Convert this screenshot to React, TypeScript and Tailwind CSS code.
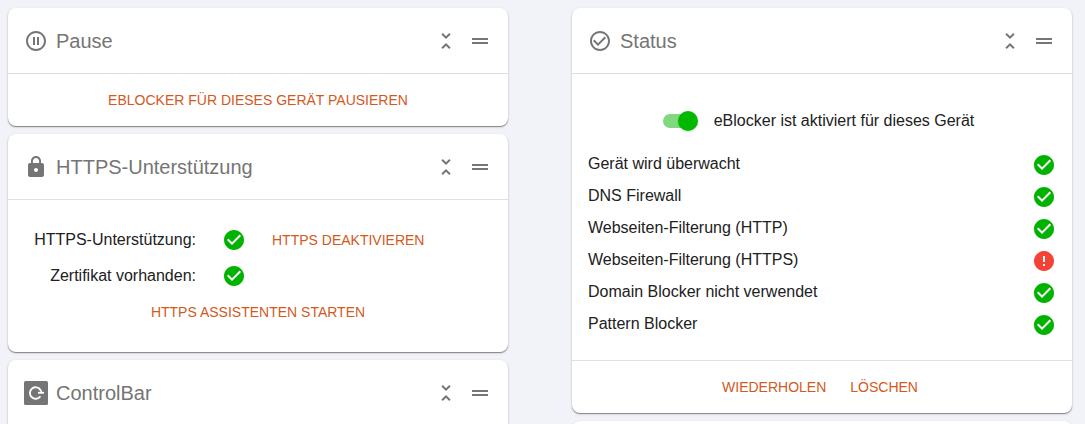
import { useState, type ReactNode } from "react";
import {
  MdCheckCircle,
  MdCheckCircleOutline,
  MdDragHandle,
  MdError,
  MdLock,
  MdPauseCircleOutline,
  MdUnfoldLess,
} from "react-icons/md";

function ControlBarIcon() {
  return (
    <svg viewBox="0 0 24 24" className="size-6" aria-hidden="true">
      <rect width="24" height="24" rx="1.5" fill="#757575" />
      <path d="M16.4 15.2A5.7 5.7 0 1 1 16.6 9.2" fill="none" stroke="#fff" strokeWidth="1.9" />
      <path d="M14 11.8h6" fill="none" stroke="#fff" strokeWidth="1.8" />
      <path d="M16.2 8.4L18 12" fill="none" stroke="#fff" strokeWidth="1.6" />
    </svg>
  );
}

function Card({ icon, title, children }: { icon?: ReactNode; title?: string; children?: ReactNode }) {
  return (
    <section className="rounded-lg bg-white shadow-[0_1px_1px_rgba(0,0,0,0.4),0_1px_3px_rgba(0,0,0,0.14)]">
      <header className="flex h-[66px] items-center gap-2 border-b border-[#dfdfe1] px-4 pt-px text-[#757575]">
        {icon}
        <h2 className="grow text-xl">{title}</h2>
        <div className="flex gap-2.5">
          <button type="button" aria-label="Einklappen">
            <MdUnfoldLess className="size-6" />
          </button>
          <button type="button" aria-label="Verschieben">
            <MdDragHandle className="size-6" />
          </button>
        </div>
      </header>
      {children}
    </section>
  );
}

function ActionButton({ children }: { children: ReactNode }) {
  return (
    <button type="button" className="h-9 px-1.5 text-sm text-[#d3591c] uppercase">
      {children}
    </button>
  );
}

function StateIcon({ ok }: { ok: boolean }) {
  return ok ? (
    <MdCheckCircle className="size-6 shrink-0 text-[#00b300]" />
  ) : (
    <MdError className="size-6 shrink-0 text-[#f44336]" />
  );
}

const checks = [
  { label: "Gerät wird überwacht", ok: true },
  { label: "DNS Firewall", ok: true },
  { label: "Webseiten-Filterung (HTTP)", ok: true },
  { label: "Webseiten-Filterung (HTTPS)", ok: false },
  { label: "Domain Blocker nicht verwendet", ok: true },
  { label: "Pattern Blocker", ok: true },
];

export default function App() {
  const [enabled, setEnabled] = useState(true);

  return (
    <main className="grid h-screen grid-cols-2 items-start gap-16 overflow-hidden bg-[#f2f3f8] pt-2 pr-[13px] pl-2 font-['Liberation_Sans',Arial,sans-serif] text-base text-[#212121]">
      <div className="flex flex-col gap-2">
        <Card icon={<MdPauseCircleOutline className="size-6" />} title="Pause">
          <div className="flex justify-center py-2">
            <ActionButton>eBlocker für dieses Gerät pausieren</ActionButton>
          </div>
        </Card>
        <Card icon={<MdLock className="size-6" />} title="HTTPS-Unterstützung">
          <div className="px-4 py-[22px]">
            <div className="grid grid-cols-[178px_24px_1fr] items-center gap-x-5">
              <span className="pr-1.5 text-right">HTTPS-Unterstützung:</span>
              <StateIcon ok />
              <div>
                <ActionButton>HTTPS deaktivieren</ActionButton>
              </div>
              <span className="flex h-9 items-center justify-end pr-1.5">Zertifikat vorhanden:</span>
              <StateIcon ok />
            </div>
            <div className="flex justify-center">
              <ActionButton>HTTPS Assistenten starten</ActionButton>
            </div>
          </div>
        </Card>
        <Card icon={<ControlBarIcon />} title="ControlBar">
          <div className="h-13" />
        </Card>
      </div>

      <div className="flex flex-col gap-2">
        <Card icon={<MdCheckCircleOutline className="size-6" />} title="Status">
          <div className="px-4 pt-7 pb-[19px]">
            <label className="mb-[9px] flex h-[38px] items-center justify-center gap-4 pr-2">
              <input
                type="checkbox"
                role="switch"
                checked={enabled}
                onChange={(e) => setEnabled(e.target.checked)}
                className="relative h-5 w-9 appearance-none before:absolute before:top-[3px] before:left-px before:h-3.5 before:w-[34px] before:rounded-full before:bg-[#9e9e9e] after:absolute after:top-0 after:left-0 after:size-5 after:rounded-full after:bg-[#fafafa] after:shadow checked:before:bg-[#80d980] checked:after:left-4 checked:after:bg-[#00b900]"
              />
              <span>eBlocker ist aktiviert für dieses Gerät</span>
            </label>
            <ul>
              {checks.map((check) => (
                <li key={check.label} className="flex h-8 justify-between">
                  <span className="leading-[30px]">{check.label}</span>
                  <span className="self-center">
                    <StateIcon ok={check.ok} />
                  </span>
                </li>
              ))}
            </ul>
          </div>
          <footer className="flex justify-center gap-3 border-t border-[#dfdfe1] py-2 pr-1">
            <ActionButton>Wiederholen</ActionButton>
            <ActionButton>Löschen</ActionButton>
          </footer>
        </Card>
        <Card />
      </div>
    </main>
  );
}
